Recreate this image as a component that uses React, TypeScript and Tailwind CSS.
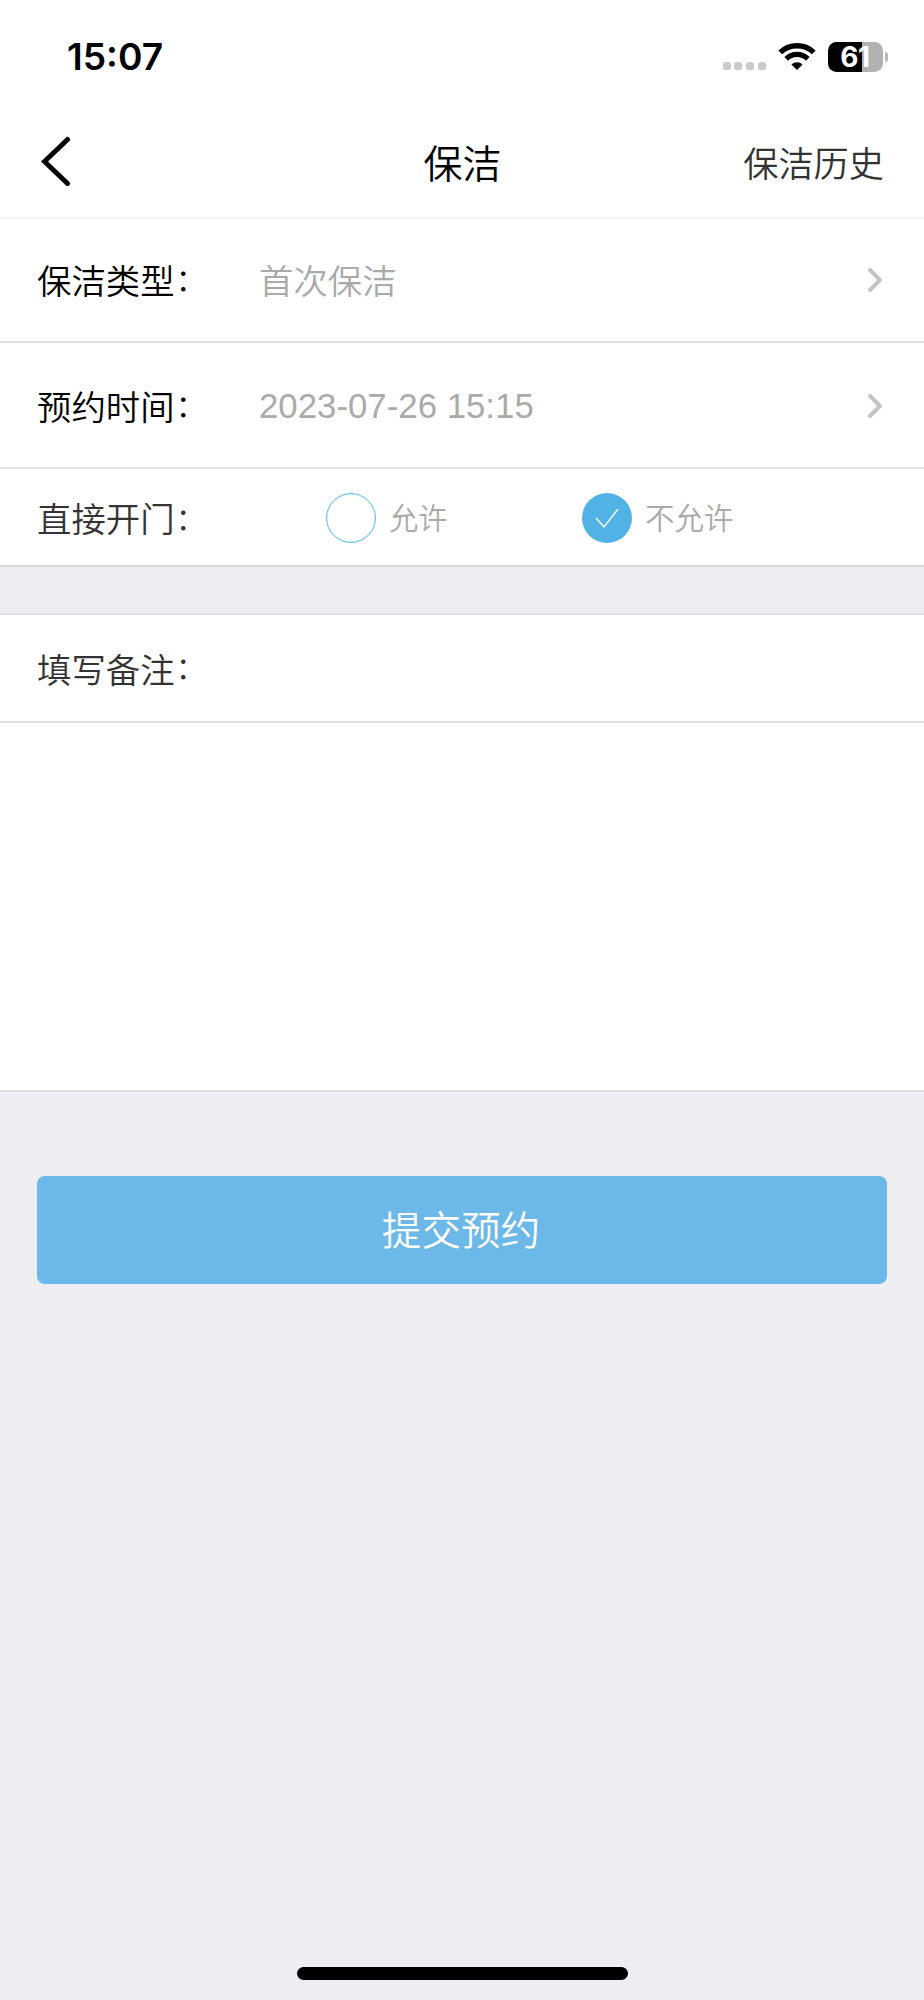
import type { ReactNode } from "react";

function Colon() {
  return <span className="relative -top-[2.5px] ml-[1px] text-[31px] leading-none">：</span>;
}

function StatusBar() {
  return (
    <div className="flex h-[110px] items-start justify-between pl-[67px] pr-[36px]">
      <div className="pt-[35px] font-['Inter',sans-serif] text-[37.2px] leading-[44px] font-semibold text-black">
        15:07
      </div>
      <div className="flex pt-[41px]">
        <div className="mt-[21px] flex gap-[3.6px]">
          <i className="size-[8px] rounded-[2.5px] bg-[#cbcbcb]" />
          <i className="size-[8px] rounded-[2.5px] bg-[#cbcbcb]" />
          <i className="size-[8px] rounded-[2.5px] bg-[#cbcbcb]" />
          <i className="size-[8px] rounded-[2.5px] bg-[#cbcbcb]" />
        </div>
        <svg className="ml-[12px] h-[30px] w-[38px]" viewBox="0 0 38 30" fill="none" stroke="#000">
          <path d="M2.2 11.4A24.4 24.4 0 0 1 35.8 11.4" strokeWidth="5.4" />
          <path d="M8.2 17.8A15.4 15.4 0 0 1 29.8 17.8" strokeWidth="5.2" />
          <path d="M19 29L13.4 23.4A8.2 8.2 0 0 1 24.6 23.4Z" fill="#000" stroke="none" />
        </svg>
        <div className="ml-[12px] mt-px flex h-[30px] w-[55px] items-center justify-center rounded-[8.5px] bg-[linear-gradient(90deg,#000_61%,#b2b2b2_61%)] font-['Inter',sans-serif] text-[28px] font-bold tracking-[-0.5px] text-white">
          61
        </div>
        <i className="ml-[2px] mt-[11px] h-[10px] w-[3.5px] rounded-r-full bg-[#b8b8b8]" />
      </div>
    </div>
  );
}

function Chevron() {
  return (
    <svg className="mt-px h-[26px] w-[16px]" viewBox="0 0 16 26" fill="none" stroke="#c4c4c4" strokeWidth="4" strokeLinecap="round" strokeLinejoin="round">
      <path d="M3 3L13 13L3 23" />
    </svg>
  );
}

function Row({ label, children }: { label: string; children: ReactNode }) {
  return (
    <div className="flex h-[126px] items-center border-b-2 border-[#e1e1e2] pl-[37px] pr-[41px]">
      <div className="w-[222px] pt-[5px] text-black">
        {label}
        <Colon />
      </div>
      <div className="flex-1 pt-[5px] text-[#aaaaaa]">{children}</div>
      <Chevron />
    </div>
  );
}

export default function App() {
  return (
    <div className="flex h-[2000px] w-[924px] flex-col bg-[#eeedf2] font-['Liberation_Sans','Noto_Sans_CJK_SC_DemiLight','Noto_Sans_CJK_SC',sans-serif] text-[34.4px] leading-[50px] font-[350]">
      <div className="h-[217px] bg-white">
        <StatusBar />
        <div className="grid h-[107px] grid-cols-3 items-center pl-[41px] pr-[40px]">
          <svg className="-mt-[6px] h-[50px] w-[30px]" viewBox="0 0 30 50" fill="none" stroke="#000" strokeWidth="5" strokeLinecap="round">
            <path d="M26.5 3.5L3.5 25.5L26.5 47.5" />
          </svg>
          <div className="pt-[2px] text-center text-[39px] text-black">保洁</div>
          <div className="pt-[2px] text-right text-[35.2px] text-[#333]">保洁历史</div>
        </div>
      </div>

      <div className="bg-white">
        <div className="border-t-2 border-[#f4f4f4]">
          <div className="-mt-[2px]">
            <Row label="保洁类型">首次保洁</Row>
          </div>
        </div>
        <Row label="预约时间">
          <span className="relative -top-[2px] text-[34.8px]">2023-07-26 15:15</span>
        </Row>
        <div className="flex h-[98px] items-center border-b-2 border-[#dadadd] pl-[37px]">
          <div className="w-[289px] pt-[6px] text-[#333]">
            直接开门
            <Colon />
          </div>
          <div className="flex w-[256px] items-center pt-px text-[29.3px] text-[#aaaaaa]">
            <i className="mr-[13px] size-[50px] rounded-full border-[1.5px] border-[#5cc0ee] shadow-[inset_0_0_0_0.5px_#bfe6f8]" />
            <span className="pt-[2px]">允许</span>
          </div>
          <div className="flex items-center pt-px text-[29.5px] text-[#aaaaaa]">
            <svg className="mr-[13px] size-[50px]" viewBox="0 0 50 50" fill="none">
              <circle cx="25" cy="25" r="25" fill="#51b2e6" />
              <path d="M14 25L22 34L36 16" stroke="#fff" strokeWidth="1.4" />
            </svg>
            <span className="pt-[2px]">不允许</span>
          </div>
        </div>
      </div>

      <div className="mt-[46px] border-y-2 border-[#dfdfe3] bg-white">
        <div className="flex h-[108px] items-center border-b-2 border-[#e1e1e2] pl-[37px] pt-[5px] text-[#333]">
          填写备注
          <Colon />
        </div>
        <textarea className="block h-[367px] w-full resize-none bg-white px-[37px] outline-none" />
      </div>

      <button className="mx-[37px] mt-[84px] h-[108px] rounded-[8px] bg-[#6bb8e9] pt-[2px] pr-[2px] text-[39.6px] text-white">
        提交预约
      </button>

      <div className="mx-auto mt-auto mb-[20px] h-[13px] w-[331px] rounded-full bg-black" />
    </div>
  );
}
